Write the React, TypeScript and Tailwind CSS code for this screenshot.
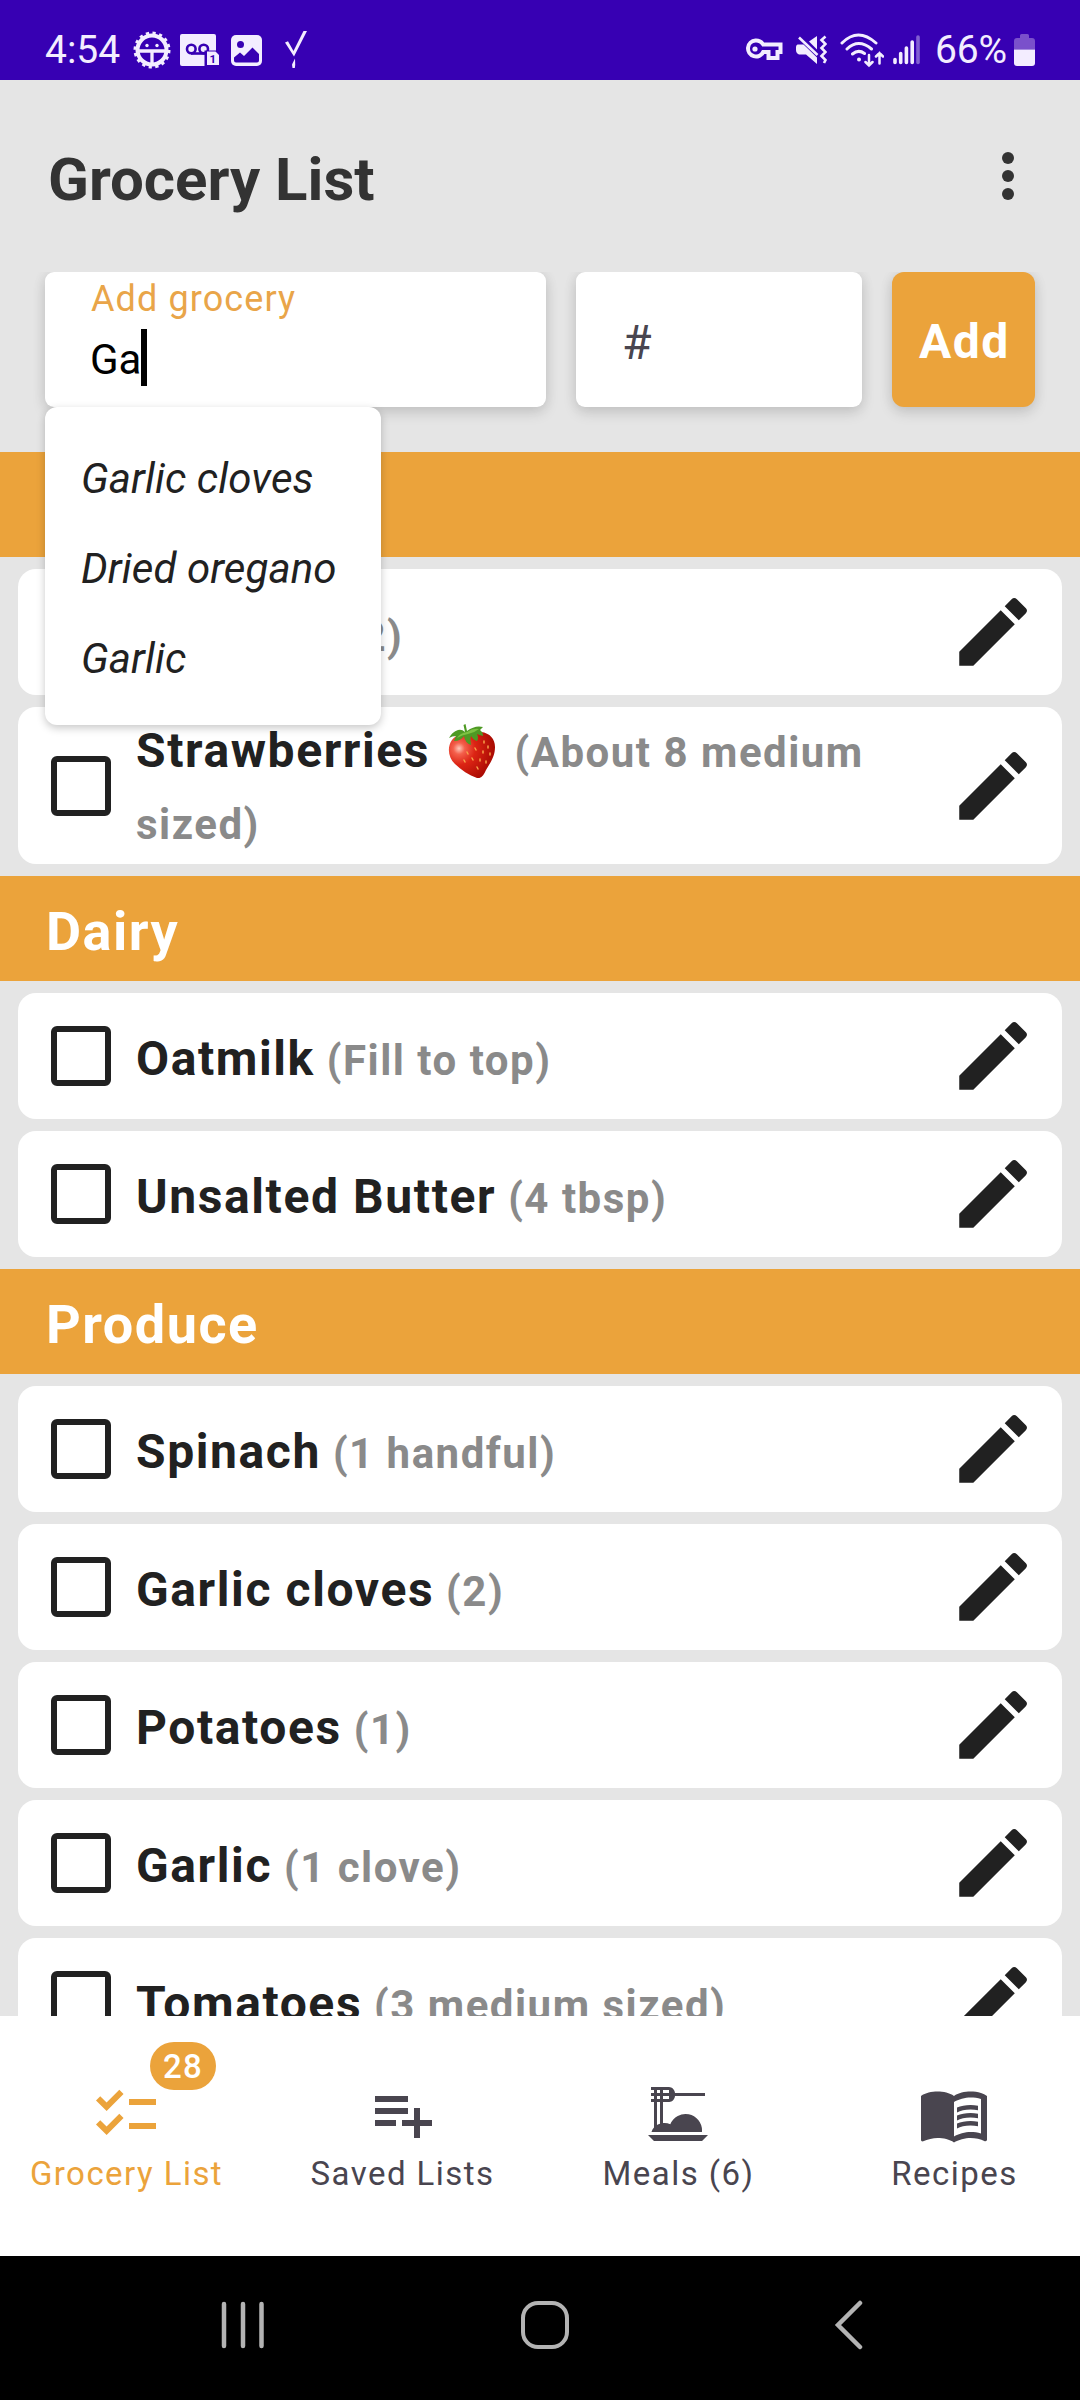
import React from "react";
import { MdChecklist, MdDinnerDining, MdEdit, MdMenuBook, MdPlaylistAdd } from "react-icons/md";

type Item = { name: string; qty: string; emoji?: boolean };

function StatusBar() {
  return (
    <header className="flex h-[80px] shrink-0 items-start justify-between bg-[#3700b3] pl-[45px] pr-[45px] text-[#f3edff]">
      <div className="flex h-[100px] items-center">
        <span className="w-[75px] pt-[1px] text-[39px] leading-none">4:54</span>
        <svg className="ml-[13px] shrink-0" width="38" height="38" viewBox="0 0 38 38">
          <circle cx="19" cy="19" r="17" fill="none" stroke="currentColor" strokeWidth="3" strokeDasharray="3.2 3.476" />
          <circle cx="19" cy="19" r="14.500" fill="none" stroke="currentColor" strokeWidth="4" />
          <path d="M6 20h26M19 20v14" stroke="currentColor" strokeWidth="3.300" />
          <circle cx="14" cy="14.500" r="1.700" fill="currentColor" />
          <circle cx="24" cy="14.500" r="1.700" fill="currentColor" />
        </svg>
        <svg className="ml-[9px] shrink-0" width="39" height="32" viewBox="0 0 39 32">
          <path d="M2 0h32a2 2 0 0 1 2 2v30H2a2 2 0 0 1-2-2V2a2 2 0 0 1 2-2z" fill="currentColor" />
          <circle cx="11.300" cy="15" r="4.300" fill="none" stroke="#3700b3" strokeWidth="2.600" />
          <circle cx="23.700" cy="15" r="4.300" fill="none" stroke="#3700b3" strokeWidth="2.600" />
          <path d="M11 19.500h14" stroke="#3700b3" strokeWidth="2.600" />
          <path d="M24.500 16.500H40V33H24.500z" fill="#3700b3" />
          <path d="M27 17.500h8.500l3.500 3.500V31H27z" fill="currentColor" />
          <text x="29.500" y="28.500" fontSize="11.500" fontWeight="700" fill="#3700b3">1</text>
        </svg>
        <svg className="ml-[12px] shrink-0" width="31" height="31" viewBox="0 0 31 31">
          <rect width="31" height="31" rx="5" fill="currentColor" />
          <circle cx="9.500" cy="9.500" r="3.500" fill="#3700b3" />
          <path d="M3 22.500l6-5 4 3.500 8.500-8.500L28 19v6.500q0 2-2 2H5q-2 0-2-2z" fill="#3700b3" />
        </svg>
        <svg className="ml-[23px] shrink-0" width="22" height="38" viewBox="0 0 22 38">
          <path d="M0 11.500l3-1.300 5.500 9.800L18.500 0H22L9 25.500z" fill="currentColor" />
          <path d="M7.500 37l-.5-3.500 3-6 .2 6.500-.4 3z" fill="currentColor" />
        </svg>
      </div>
      <div className="flex h-[100px] items-center">
        <svg className="shrink-0" width="38" height="24" viewBox="0 0 38 24">
          <path d="M10.500 2.500a8 8 0 1 0 7.700 11.500h5.300v6h9v-6h3V6.500H18.200A8.500 8.500 0 0 0 10.500 2.500z" fill="none" stroke="currentColor" strokeWidth="4" />
          <circle cx="10" cy="11" r="2.600" fill="currentColor" />
        </svg>
        <svg className="ml-[13px] shrink-0" width="31" height="30" viewBox="0 0 31 30">
          <path d="M1.500 9.500h6L21 22.500V29l-11-9.500H3Q0 18 0 15v-3q0-2 1.500-2.500z" fill="currentColor" />
          <path d="M13 6.500L21 1v13.500z" fill="currentColor" />
          <path d="M3 2.500L21.500 20" stroke="currentColor" strokeWidth="2.600" />
          <path d="M29.500 1.500L25.500 5l4 4-4 4 4 4-4 4 4 4-1.500 3" fill="none" stroke="currentColor" strokeWidth="2.600" />
        </svg>
        <svg className="ml-[13px] shrink-0" width="44" height="36" viewBox="0 0 44 36" fill="none" stroke="currentColor" strokeWidth="3" strokeLinecap="round">
          <path d="M2 11q16-16 34 0M7 17q11.500-11 24.500 0M12.500 22q6-5 12-.5" />
          <circle cx="19" cy="27.500" r="2" fill="currentColor" stroke="none" />
          <path d="M29 23v10.500m-3.500-3.500l3.500 3.500 3.500-3.500M39.500 31.500V21m-3.500 3.500l3.500-3.500 3.500 3.500" strokeWidth="2.500" />
        </svg>
        <svg className="ml-[9px] shrink-0" width="28" height="30" viewBox="0 0 28 30" fill="none" stroke="currentColor" strokeWidth="3.600" strokeLinecap="round">
          <path d="M2 24.500V27.500M7.700 18.500V27.500M13.400 13V27.500M19.200 7V27.500" />
          <path d="M25 2V27.500" opacity=".4" />
        </svg>
        <span className="ml-[14px] w-[72px] pt-[1px] text-[39px] leading-none tracking-[-0.2px]">66%</span>
        <svg className="ml-[7px] shrink-0" width="21" height="32" viewBox="0 0 21 32">
          <path d="M3 4h3V1.500Q6 0 7.500 0h6Q15 0 15 1.500V4h3q3 0 3 3v8.500H0V7q0-3 3-3z" fill="#7a50cb" />
          <path d="M0 15.500h21V29q0 3-3 3H3q-3 0-3-3z" fill="currentColor" />
        </svg>
      </div>
    </header>
  );
}

function Strawberry() {
  return (
    <svg className="ml-[4px] mr-[8px] mb-[-11px] mt-[-12px] inline-block align-baseline" width="47" height="54" viewBox="0 0 47 54">
      <defs>
        <radialGradient id="berry" cx="22%" cy="36%" r="78%">
          <stop offset="0" stopColor="#ffc9bb" />
          <stop offset=".16" stopColor="#f4604c" />
          <stop offset=".45" stopColor="#dc2414" />
          <stop offset="1" stopColor="#a80a02" />
        </radialGradient>
      </defs>
      <path d="M4 16C-1 23 0 33 7 40c6 6 14 11 22 14 4 1 7-3 9-8 4-7 9-13 9-23 0-8-5-14-14-15C22 7 9 9 4 16z" fill="url(#berry)" />
      <path d="M19 28l1 2M27 24l1 2M35 27v2M24 34l1 2M32 35v2M40 22v2M29 43l1 2M38 37v2M16 36l1 2M36 17v2M42 29v2" stroke="#f7a04a" strokeWidth="1.500" strokeLinecap="round" />
      <path d="M17 8L15.500 1l2-1 1.500 7q8-6 16-4l-3 3q3 2 3 6-4-1-6-2 2 4 0 7-4-1-6-5-1 3 0 9-6-2-7-9-3 5-10 5l2-5q-4 0-7 2Q4 8 10 6q4-1 7 2z" fill="#4e9a24" />
      <path d="M19 8q6-4 12-3-5 4-11 5-6 1-11 4 3-5 10-6z" fill="#7cc242" />
    </svg>
  );
}

function Row({ item, tall }: { item: Item; tall?: boolean }) {
  return (
    <div className={"mx-[18px] mb-[12px] flex shrink-0 items-center rounded-[18px] bg-white pl-[33px] pr-[24px] " + (tall ? "h-[157px]" : "h-[126px]")}>
      <span className="size-[60px] shrink-0 rounded-[6px] border-[6px] border-[#212121]" />
      <p className={"ml-[25px] w-[780px] text-[48px] font-bold leading-[72px] tracking-[1.6px] text-[#212121] " + (tall ? "pt-[2px]" : "pt-[5px]")}>
        {item.name}
        {item.emoji && <> <Strawberry /></>}
        <span className="text-[42px] leading-none tracking-[1.5px] text-[#8a8a8a]"> ({item.qty})</span>
      </p>
      <MdEdit className="ml-auto size-[90px] shrink-0 text-[#212121]" />
    </div>
  );
}

function Section({ title, items }: { title: string; items: Item[] }) {
  return (
    <section className="shrink-0">
      <h2 className="mb-[12px] flex h-[105px] items-center bg-[#eba33b] pl-[46px] pt-[6px] text-[54px] font-bold tracking-[1.5px] text-white">{title}</h2>
      {items.map((item) => (
        <Row key={item.name} item={item} tall={item.emoji} />
      ))}
    </section>
  );
}

const sections: { title: string; items: Item[] }[] = [
  { title: "Fruit", items: [{ name: "Bananas", qty: "2" }, { name: "Strawberries", qty: "About 8 medium sized", emoji: true }] },
  { title: "Dairy", items: [{ name: "Oatmilk", qty: "Fill to top" }, { name: "Unsalted Butter", qty: "4 tbsp" }] },
  {
    title: "Produce",
    items: [
      { name: "Spinach", qty: "1 handful" },
      { name: "Garlic cloves", qty: "2" },
      { name: "Potatoes", qty: "1" },
      { name: "Garlic", qty: "1 clove" },
      { name: "Tomatoes", qty: "3 medium sized" },
    ],
  },
];

const fieldShadow = "shadow-[0_6px_14px_rgba(0,0,0,0.12),0_0_14px_rgba(0,0,0,0.07)]";

function AddForm() {
  return (
    <div className="flex h-[180px] shrink-0 gap-[30px] pl-[45px] [clip-path:inset(0_0_-400px_0)]">
      <div className={"relative h-[135px] w-[501px] rounded-[9px] bg-white pl-[45px] " + fieldShadow}>
        <div className="mt-[6px] pl-[1px] text-[36px] leading-[42px] tracking-[1.1px] text-[#e9a549]">Add grocery</div>
        <div className="mt-[9px] flex h-[57px] items-center text-[42px] text-black">
          <span className="pt-[3px]">Ga</span>
          <span className="h-[57px] w-[6px] bg-black" />
        </div>
        <ul className="absolute left-0 top-[135px] z-10 h-[318px] w-[336px] rounded-[12px] bg-white pl-[36px] pt-[27px] text-[42px] italic leading-[90px] tracking-[0.1px] text-[#212121] shadow-[0_3px_9px_rgba(0,0,0,0.22)]">
          <li>Garlic cloves</li>
          <li>Dried oregano</li>
          <li>Garlic</li>
        </ul>
      </div>
      <div className={"flex h-[135px] w-[286px] items-center rounded-[9px] bg-white pl-[46px] pt-[6px] text-[48px] text-[#49454f] " + fieldShadow}>#</div>
      <button className={"h-[135px] w-[143px] rounded-[12px] bg-[#eba33b] pl-[2px] pt-[4px] text-[48px] font-bold tracking-[1.5px] text-white " + fieldShadow}>Add</button>
    </div>
  );
}

const tabs = [
  { label: "Grocery List", icon: MdChecklist, badge: "28" },
  { label: "Saved Lists", icon: MdPlaylistAdd },
  { label: "Meals (6)", icon: MdDinnerDining },
  { label: "Recipes", icon: MdMenuBook },
];

export default function App() {
  return (
    <div className="flex h-[2400px] w-[1080px] flex-col overflow-hidden bg-[#e5e5e5] font-[Roboto,sans-serif]">
      <StatusBar />
      <div className="flex h-[192px] shrink-0 items-center justify-between pl-[48px] pr-[66px]">
        <h1 className="pt-[8px] text-[60px] font-bold text-[#333333]">Grocery List</h1>
        <div className="flex flex-col gap-[6px]">
          <span className="size-[12px] rounded-full bg-[#333333]" />
          <span className="size-[12px] rounded-full bg-[#333333]" />
          <span className="size-[12px] rounded-full bg-[#333333]" />
        </div>
      </div>
      <div className="relative z-10">
        <AddForm />
      </div>
      <main className="flex h-[1564px] shrink-0 flex-col overflow-hidden">
        {sections.map((s) => (
          <Section key={s.title} {...s} />
        ))}
      </main>
      <nav className="grid h-[240px] shrink-0 grid-cols-4 gap-[24px] bg-white text-[#49454f]">
        {tabs.map(({ label, icon: Icon, badge }) => (
          <div key={label} className={"flex flex-col items-center pt-[62px] " + (badge ? "text-[#eba33b]" : "")}>
            <div className="relative">
              <Icon className="size-[72px]" />
              {badge && (
                <span className="absolute left-[60px] top-[-36px] flex h-[48px] w-[66px] items-center justify-center rounded-full bg-[#eba33b] pt-[2px] text-[33px] font-medium tracking-[1.3px] text-white">{badge}</span>
              )}
            </div>
            <span className="mt-[4px] whitespace-nowrap pl-[1px] text-[33px] leading-[40px] tracking-[1.45px]">{label}</span>
          </div>
        ))}
      </nav>
      <footer className="flex h-[144px] shrink-0 items-center bg-black pb-[6px] text-[#b3b3b3]">
        <svg className="ml-[221px]" width="43" height="48" viewBox="0 0 43 48">
          <path d="M3 3v42M22 3v42M40.500 3v42" stroke="currentColor" strokeWidth="4.500" strokeLinecap="round" />
        </svg>
        <span className="ml-[257px] size-[48px] rounded-[17px] border-[4.5px] border-[#b3b3b3]" />
        <svg className="ml-[264px]" width="30" height="50" viewBox="0 0 30 50" fill="none" stroke="currentColor" strokeWidth="4.500" strokeLinecap="round">
          <path d="M27 3L5 25l22 22" />
        </svg>
      </footer>
    </div>
  );
}
